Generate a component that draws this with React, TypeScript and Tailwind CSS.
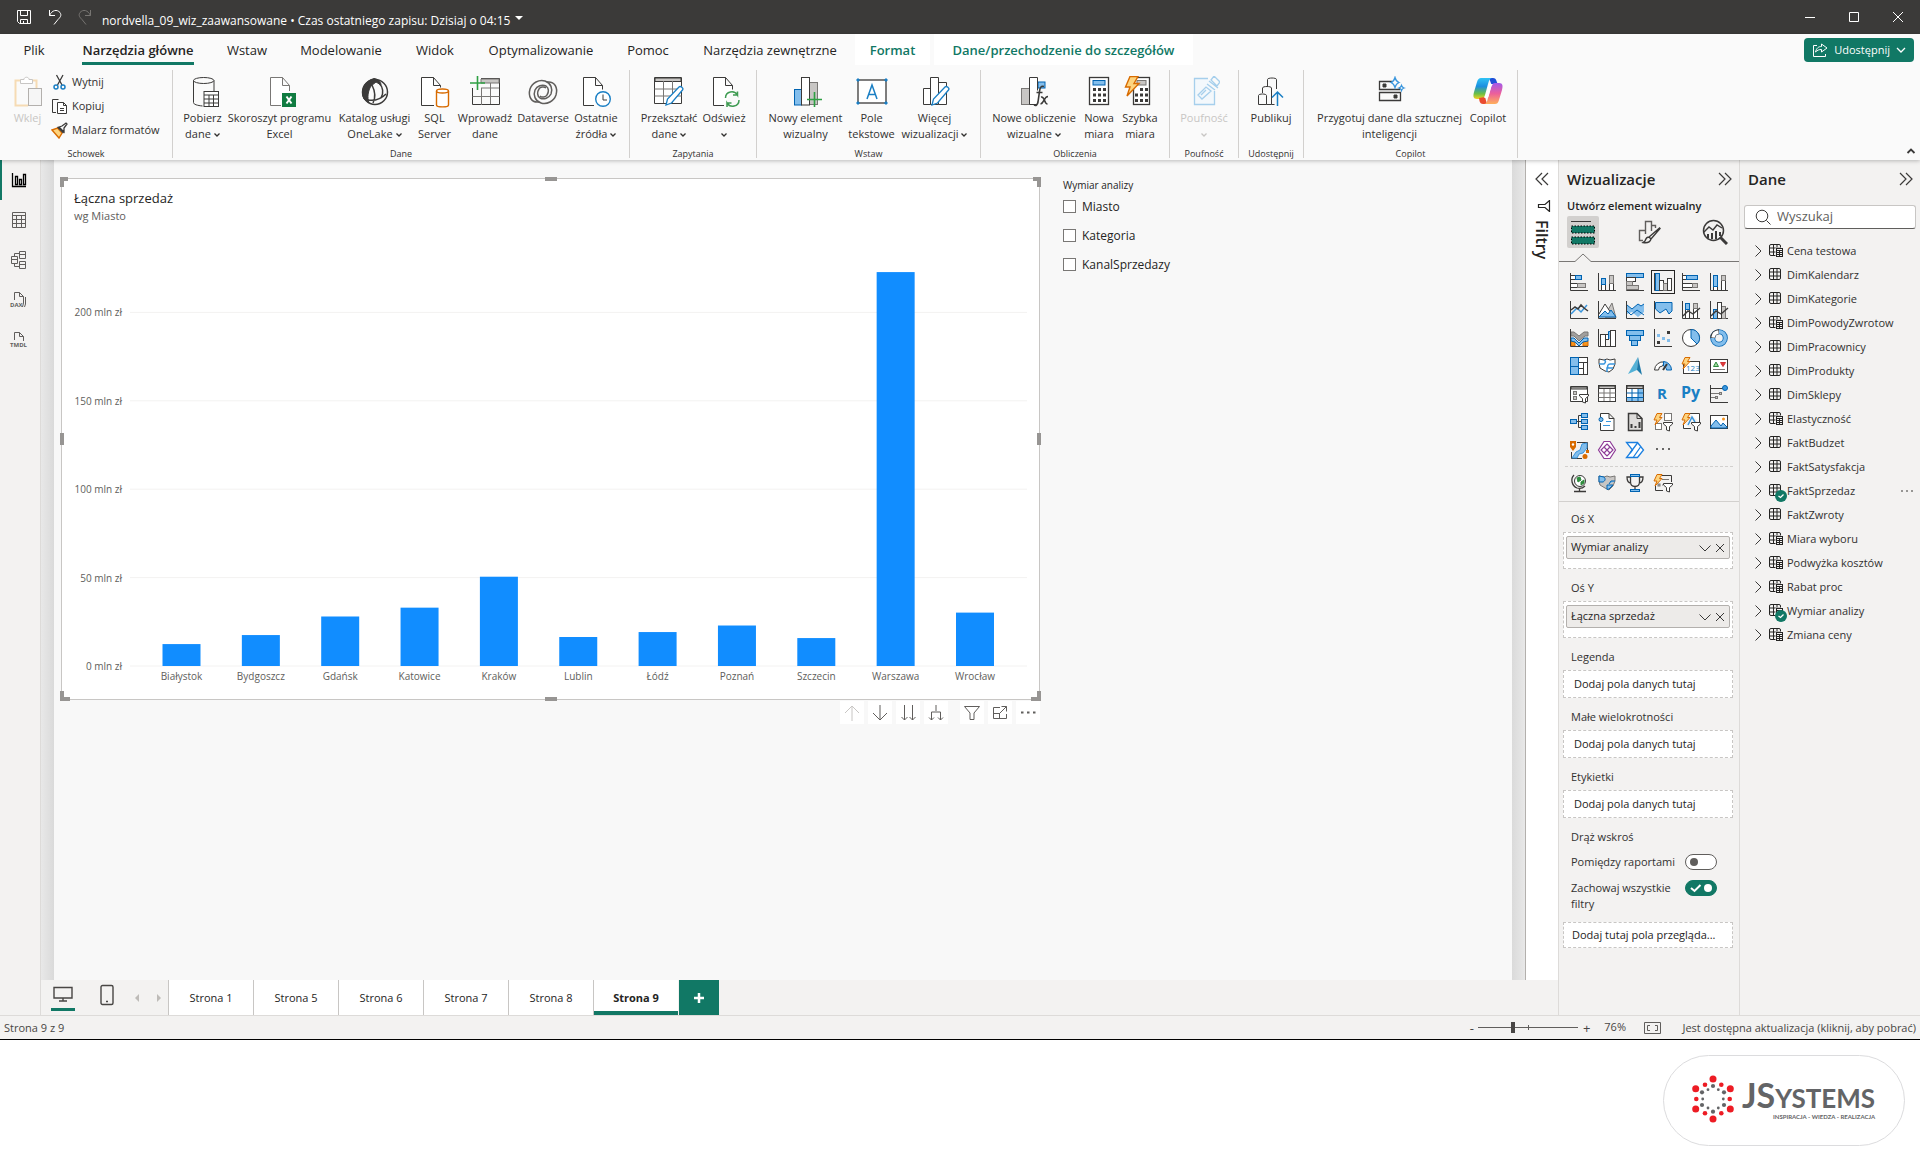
import React from 'react';
import clsx from 'clsx';

const INK = '#3b3a39';
const BLUE = '#0063b1';
const SKY = '#83beec';

const TONES = {
  white: { fill: '#ffffff', stroke: INK },
  blue: { fill: SKY, stroke: BLUE },
  gray: { fill: '#c8c6c4', stroke: '#797775' },
  dim: { fill: '#ffffff', stroke: '#797775' },
};

interface BoxProps {
  x: number;
  y: number;
  w: number;
  h: number;
  tone?: keyof typeof TONES;
}

const Box: React.FC<BoxProps> = ({ x, y, w, h, tone = 'white' }) => (
  <rect x={x} y={y} width={w} height={h} fill={TONES[tone].fill} stroke={TONES[tone].stroke} />
);

interface GlyphProps {
  w?: number;
  h?: number;
  color?: string;
  className?: string;
  children: React.ReactNode;
}

const Glyph: React.FC<GlyphProps> = ({ w = 18, h = w, color = INK, className, children }) => (
  <svg
    width={w}
    height={h}
    viewBox={`0 0 ${w} ${h}`}
    fill="none"
    stroke={color}
    className={clsx('shrink-0', className)}
    aria-hidden="true"
  >
    {children}
  </svg>
);

const Bolt = () => <path d="M3 .5h5L5.500 4.500H8L1 12l2-5H0z" fill="#fdd47f" stroke="#d86b00" />;

const SmallFunnel = () => (
  <path d="M9.500 9.500h9V11l-3 2.500v4.500l-3-1v-3.500l-3-2.500z" fill="#fff" stroke={INK} />
);

/* ---------- ribbon icons, 32px ---------- */

const Pencil = () => (
  <path d="M13 29l1.500-6L26 11c1.500-1.500 5 1 3.500 3L18.500 27z" fill="#fff" stroke="#1a7fc4" strokeWidth="1.3" />
);

const ribbonIcons: Record<string, React.ReactNode> = {
  getData: (
    <>
      <path d="M6.500 4.500v22c0 2 4 3 9 3.500M27 4.500V15" />
      <ellipse cx="16.7" cy="4.5" rx="10.2" ry="3" />
      <rect x="17" y="15.5" width="14.5" height="15" fill="#fff" />
      <path d="M17 19h14.500M17 23h14.500M17 27h14.500M22 19v11M26.500 19v11" />
    </>
  ),
  excel: (
    <>
      <path d="M17 29.500H6.500v-28h12l7 8V15M18.500 1.500v8h7" fill="#fff" stroke="#797775" />
      <rect x="18" y="17" width="14" height="14" fill="#107c41" stroke="none" />
      <path d="M22.500 20.500l5 7M27.500 20.500l-5 7" stroke="#fff" strokeWidth="2" />
    </>
  ),
  oneLake: (
    <>
      <circle cx="16" cy="16" r="12.5" strokeWidth="1.5" />
      <path d="M15 2.500C5 5 1 15 5 23l5 4c-2-6-1-12 2-17l5-4 5 3c0-3-3-6-7-6.500z" fill={INK} />
      <path d="M13 9c3 6 4 12 1 18M9 24c6 1 13-1 18-6M20 7c4 4 5 10 2 15" strokeWidth="1.5" />
    </>
  ),
  sql: (
    <>
      <path d="M15 29.500H2.500v-28h12l7 8v2M14.500 1.500v8h7" fill="#fff" />
      <path d="M17.500 15v14c0 2.500 12 2.500 12 0V15" fill="#fff" stroke="#d86b00" strokeWidth="1.4" />
      <ellipse cx="23.5" cy="15" rx="6" ry="2" fill="#fff" stroke="#d86b00" strokeWidth="1.4" />
    </>
  ),
  enterData: (
    <>
      <path d="M3.500 12v16.500h27v-26H12" />
      <path d="M12 3h18v4H12z" fill="#c8c6c4" stroke="#797775" />
      <path d="M3.500 20.500h27M12 12h18M12.500 12v17M21.500 7v21" stroke="#797775" />
      <path d="M1 7h15M8.500 0v14" stroke="#2ea043" strokeWidth="1.6" />
    </>
  ),
  dataverse: (
    <g strokeWidth="1.5" stroke="#605e5c">
      <path d="M12 26C4 27 1 20 3 13c2-6 9-10 15-8 6 2 8 8 6 13-2 4-7 6-11 4-3-2-3-6-1-9 1-2 5-3 7-1" />
      <path d="M20 6c8-1 11 6 9 13-2 6-9 10-15 8-6-2-8-8-6-13 2-4 7-6 11-4 3 2 3 6 1 9-1 2-5 3-7 1" />
    </g>
  ),
  recent: (
    <>
      <path d="M14 29.500H3.500v-28h12l7 8v4M15.500 1.500v8h7" fill="#fff" />
      <circle cx="23" cy="23" r="7.3" fill="#fff" stroke="#1a7fc4" strokeWidth="1.4" />
      <path d="M23 18.500V24h4" />
    </>
  ),
  transform: (
    <>
      <path d="M1.500 1.500h27v26h-27z" fill="#fff" />
      <path d="M2 2h26v3.500H2z" fill="#c8c6c4" stroke={INK} />
      <path d="M1.500 13h27M1.500 20h27M10.500 5v22M19.500 5v22" stroke="#797775" />
      <Pencil />
    </>
  ),
  refresh: (
    <>
      <path d="M16 29.500H5.500v-28h12l7 8v4M17.500 1.500v8h7" fill="#fff" />
      <path
        d="M17.500 22c0-7 9-8 12-3v-3.500M29.500 19H25M31 24c0 7-9 8-12 3v4M19 27h4.500"
        stroke="#3f9b52"
        strokeWidth="1.5"
      />
    </>
  ),
  newVisual: (
    <>
      <rect x="4.5" y="13.5" width="7" height="15.5" fill={SKY} stroke={BLUE} />
      <rect x="19.5" y="6.5" width="8" height="22" fill="#c8c6c4" stroke="#797775" />
      <rect x="11.5" y="1.5" width="8" height="27.5" fill="#fff" />
      <path d="M17 23.500h15M24.500 16v15" stroke="#2ea043" strokeWidth="1.6" />
    </>
  ),
  textBox: (
    <>
      <rect x="2" y="4" width="28" height="23" fill="#fff" strokeWidth="1.3" />
      <path d="M11 23l5-14 5 14M12.500 18.500h7" stroke="#1a7fc4" strokeWidth="1.5" />
      <path d="M1 3h2v2H1zM29 3h2v2h-2zM1 26h2v2H1zM29 26h2v2h-2z" fill="#1a7fc4" stroke="#1a7fc4" />
    </>
  ),
  moreVisuals: (
    <>
      <path d="M4.500 28.500v-16h7v16zM19.500 28.500v-22h8v22z" fill="#fff" />
      <path d="M11.500 1.500h8v27h-8z" fill="#fff" />
      <Pencil />
    </>
  ),
  newCalc: (
    <>
      <rect x="3.5" y="12.5" width="8" height="16" fill="#c8c6c4" stroke="#797775" />
      <rect x="20" y="6" width="7" height="6" fill={SKY} stroke={BLUE} />
      <path d="M19 28.500h-7.500v-27h8v13" fill="#fff" />
      <path
        d="M26 10.500c-3-1-4 1-4.500 5L20 26c-.5 3-2 4-4 3M18.500 16.500h6M23 21c4-1 3 7 6.500 7M30 20.500c-4 0-4 7-7.500 7.500"
        strokeWidth="1.6"
      />
    </>
  ),
  measure: (
    <>
      <rect x="6.5" y="1.5" width="19" height="27" fill="#fff" strokeWidth="1.3" />
      <rect x="10" y="4.5" width="12" height="4.5" fill={SKY} stroke={BLUE} />
      <path d="M10 13.500h13M10 19h13M10 24.500h13" strokeWidth="3" strokeDasharray="3 2" />
    </>
  ),
  quickMeasure: (
    <>
      <rect x="9.5" y="1.5" width="16" height="27" fill="#fff" strokeWidth="1.3" />
      <rect x="13" y="4.5" width="9" height="4.5" fill="#c8c6c4" stroke="#797775" />
      <path d="M11 19h13M11 24.500h13M16 13.500h8" strokeWidth="3" strokeDasharray="3 2" />
      <path d="M6 .5h8l-4 7h5L3 20l3-9H1.500z" fill="#fdd47f" stroke="#d86b00" strokeWidth="1.4" />
    </>
  ),
  sensitivity: (
    <g stroke="#a6cfec" strokeWidth="1.3">
      <path d="M20 2.500H6.500v26h20V15" fill="#f3f8fc" />
      <path d="M10 19l8-8 5 4-9 8zM13 19l5-5M21 5l9 7M19 8l8 6M23 4l3-4 6 6-3 4z" />
    </g>
  ),
  publish: (
    <>
      <path d="M3.500 28.500v-9c0-2 8-2 8 0v9zM7.500 17v-5c0-2 9-2 9 0v16.500h-5M12.500 10V3.500c0-2 9-2 9 0V13M16.500 28.500h3" />
      <path d="M22.500 30V17M17 21.500l5.500-5.500 5.500 5.500" stroke="#1a7fc4" strokeWidth="1.5" />
    </>
  ),
  prepAi: (
    <>
      <path d="M18 5.500H5.500v8h20v-2M5.500 16.500h21v8h-21z" strokeWidth="1.3" />
      <path d="M9 8h3v3H9zM20 19h3v3h-3z" fill={INK} />
      <path
        d="M21 1.500c.8 3 1.500 4 4 5-2.500 1-3.200 2-4 5-.8-3-1.500-4-4-5 2.500-1 3.200-2 4-5zM27.500 9.500c.5 1.500 1 2 2.500 2.500-1.500.5-2 1-2.500 2.500-.5-1.500-1-2-2.500-2.500 1.500-.5 2-1 2.500-2.500z"
        stroke="#3a96dd"
        strokeWidth="1.3"
      />
    </>
  ),
  copilot: (
    <g stroke="none">
      <defs>
        <linearGradient id="copilotLeft" x1="0" y1="0" x2="0" y2="1">
          <stop offset="0" stopColor="#2fc3f5" />
          <stop offset=".4" stopColor="#1b8fe0" />
          <stop offset=".75" stopColor="#6cbf45" />
          <stop offset="1" stopColor="#f5d020" />
        </linearGradient>
        <linearGradient id="copilotRight" x1="0" y1="0" x2="0" y2="1">
          <stop offset="0" stopColor="#a259ea" />
          <stop offset=".5" stopColor="#ec5f9b" />
          <stop offset="1" stopColor="#ffb05a" />
        </linearGradient>
      </defs>
      <path d="M17 2h4c2 0 3 1 3.500 3L26 9l-6 1z" fill="#1f4fd8" />
      <path d="M9 2h11c-2 0-3 2-4 6l-3 11c-1 3-2 4-4 4H5c-4 0-4-3-3-7l3-10c1-3 2-4 4-4z" fill="url(#copilotLeft)" />
      <path d="M15 28h-4c-2 0-3-1-3.500-3L7 22l6-1z" fill="#ea4b2f" />
      <path d="M23 28H12c2 0 3-2 4-6l3-11c1-3 2-4 4-4h4c4 0 4 3 3 7l-3 10c-1 3-2 4-4 4z" fill="url(#copilotRight)" />
      <path d="M17 8h4c-1 1-1.500 2-2 4l-2 7c-.5 2-1 3-3 3h-2c1-1 1.500-3 2-4z" fill="#fff" />
    </g>
  ),
};

/* ---------- visual gallery icons, 18px ---------- */

const Axes = () => <path d="M.5 0v17.500H18" />;

const TableGrid: React.FC<{ color: string }> = ({ color }) => (
  <>
    <path d="M1 1h16v2.500H1z" fill="#c8c6c4" />
    <path d="M.5 8h17M.5 12.500h17M6 4v12M12 4v12" stroke={color} />
  </>
);

interface Visual {
  id: string;
  label: string;
  icon: React.ReactNode;
}

const visuals: Visual[] = [
  { id: 'stacked-bar', label: 'Skumulowany wykres słupkowy', icon: <><Axes /><Box x={0.5} y={2.5} w={5} h={4} /><Box x={5.5} y={2.5} w={6} h={4} tone="blue" /><Box x={0.5} y={10.5} w={7} h={4} /><Box x={7.5} y={10.5} w={8} h={4} tone="gray" /></> },
  { id: 'stacked-col', label: 'Skumulowany wykres kolumnowy', icon: <><Axes /><Box x={3.5} y={11.5} w={4} h={6} /><Box x={3.5} y={5.5} w={4} h={6} tone="blue" /><Box x={11.5} y={10.5} w={4} h={7} /><Box x={11.5} y={2.5} w={4} h={8} tone="gray" /></> },
  { id: 'bar', label: 'Wykres słupkowy', icon: <><Axes /><Box x={0.5} y={0.5} w={17} h={4} tone="blue" /><Box x={0.5} y={4.5} w={9} h={4} /><Box x={0.5} y={8.5} w={6} h={4} tone="gray" /><Box x={0.5} y={12.5} w={12} h={4} tone="gray" /></> },
  { id: 'col', label: 'Wykres kolumnowy', icon: <><Axes /><Box x={1.5} y={0.5} w={4} h={17} tone="blue" /><Box x={5.5} y={7.5} w={4} h={10} /><Box x={9.5} y={10.5} w={4} h={7} tone="gray" /><Box x={13.5} y={5.5} w={4} h={12} /></> },
  { id: 'bar100', label: 'Wykres słupkowy 100%', icon: <><Axes /><Box x={0.5} y={2.5} w={4} h={4} /><Box x={4.5} y={2.5} w={11} h={4} tone="blue" /><Box x={0.5} y={10.5} w={10} h={4} /><Box x={10.5} y={10.5} w={5} h={4} tone="gray" /></> },
  { id: 'col100', label: 'Wykres kolumnowy 100%', icon: <><Axes /><Box x={3.5} y={13.5} w={4} h={4} /><Box x={3.5} y={2.5} w={4} h={11} tone="blue" /><Box x={11.5} y={7.5} w={4} h={10} /><Box x={11.5} y={2.5} w={4} h={5} tone="gray" /></> },

  { id: 'line', label: 'Wykres liniowy', icon: <><Axes /><path d="M1 13l6-6 4 4 6-7" stroke="#3a96dd" strokeWidth="1.5" /><path d="M1 9l4-3 3 2 3-4 3 3 4 3" strokeWidth="1.5" /></> },
  { id: 'area', label: 'Wykres warstwowy', icon: <><path d="M7 14l7-12 4 15H8z" fill="#c8c6c4" stroke="#797775" /><path d="M1 13l6-10 6 9" fill="#fff" /><path d="M1 16l6-6 3 3 3-4 5 7z" fill={SKY} stroke={BLUE} /><Axes /></> },
  { id: 'stacked-area', label: 'Skumulowany wykres warstwowy', icon: <><path d="M1 4l5 4 6-5 3 2 3-2v8l-6 5-6-5-5 2z" fill={SKY} stroke="none" /><path d="M1 4l5 4 6-5 3 2 3-2M1 10l4 4 6-5 7 5" stroke={BLUE} /><Axes /></> },
  { id: 'area100', label: 'Wykres warstwowy 100%', icon: <><path d="M1.500 1.500H18V10l-3 3-3-5-6 4-4.500-4z" fill={SKY} stroke={BLUE} /><Axes /></> },
  { id: 'line-stacked', label: 'Wykres liniowy i skumulowany', icon: <><Axes /><Box x={3.5} y={7.5} w={4} h={10} /><Box x={3.5} y={2.5} w={4} h={6} tone="blue" /><Box x={11.5} y={7.5} w={4} h={10} /><Box x={11.5} y={2.5} w={4} h={5} tone="gray" /><path d="M1 15l5-5 5 3 7-6" strokeWidth="1.4" /></> },
  { id: 'line-col', label: 'Wykres liniowy i kolumnowy', icon: <><Axes /><Box x={3.5} y={8.5} w={4} h={9} tone="blue" /><Box x={11.5} y={5.5} w={4} h={12} tone="gray" /><Box x={7.5} y={1.5} w={4} h={16} /><path d="M1 15l5-5 5 3 7-6" strokeWidth="1.4" /></> },

  { id: 'ribbon', label: 'Wykres wstążkowy', icon: <><path d="M1 3h3l5 4 5-4h4v4h-3l-6 5-5-5H1z" fill="#a19f9d" stroke="#797775" /><path d="M1 12h4v5H1zM13 12h5v5h-5z" fill="#f7941d" stroke="#d86b00" /><path d="M1 9h3l5 5 5-5h4v3l-5 1-4 4-4-4-4-1z" fill={SKY} stroke={BLUE} /><Axes /></> },
  { id: 'waterfall', label: 'Wykres kaskadowy', icon: <><Axes /><Box x={2.5} y={5.5} w={5} h={12} /><Box x={7.5} y={5.5} w={3} h={5} /><path d="M10.500 10V2.500h2V10" fill={SKY} stroke={BLUE} /><Box x={12.5} y={1.5} w={5} h={16} /></> },
  { id: 'funnel', label: 'Lejek', icon: <><Box x={0.5} y={1.5} w={17} h={5} tone="blue" /><Box x={3.5} y={6.5} w={11} h={5} tone="blue" /><Box x={5.5} y={11.5} w={6} h={5} tone="blue" /></> },
  { id: 'scatter', label: 'Wykres punktowy', icon: <><Axes /><g stroke="none"><path d="M3 5h3v3H3zM8 8h3v3H8zM13 10h3v3h-3z" fill={SKY} /><path d="M13 2h3v3h-3zM3 12h3v3H3z" fill={INK} /></g></> },
  { id: 'pie', label: 'Wykres kołowy', icon: <><circle cx="9" cy="9" r="8.5" fill="#fff" /><path d="M9 .5a8.500 8.500 0 0 1 6 14.500L9 9z" fill={SKY} stroke={BLUE} /></> },
  { id: 'donut', label: 'Wykres pierścieniowy', icon: <><circle cx="9" cy="9" r="6.3" stroke={BLUE} strokeWidth="5" /><circle cx="9" cy="9" r="6.3" stroke={SKY} strokeWidth="3.4" /><path d="M2.700 9A6.300 6.300 0 0 1 9 2.700" stroke={INK} strokeWidth="5" /><path d="M3 8.500A6.300 6.300 0 0 1 8.500 3" stroke="#fff" strokeWidth="3.4" /></> },

  { id: 'treemap', label: 'Mapa drzewa', icon: <><Box x={0.5} y={0.5} w={17} h={17} /><path d="M8.500 5.500h9M13.500 5.500v12M8.500 11.500h5" /><Box x={0.5} y={0.5} w={8} h={17} tone="blue" /><path d="M.5 9.500h8" stroke={BLUE} /></> },
  { id: 'map', label: 'Mapa', icon: <><path d="M1 2l5 1 3-1 3 1 5-1v5l-2 5-4 3-4-1-5-3-1-5z" fill="#fff" /><path d="M1 7h5c2-2 2-3 0-4M9 15v-4h6M17 7h-5c-2 0-3 2-2 4" stroke="#3a96dd" strokeWidth="1.5" /></> },
  { id: 'azure-map', label: 'Azure Maps', icon: <g stroke="none"><path d="M12 0L2 17l9-4z" fill="#53b1d6" /><path d="M12 0l4 18-5-5z" fill="#1b78a8" /></g> },
  { id: 'gauge', label: 'Miernik', icon: <><path d="M.5 13a8.500 8.500 0 0 1 10-8l-2 4a4 4 0 0 0-4 4z" fill="#fff" /><path d="M9.500 4.500A8.500 8.500 0 0 1 17.500 13h-5c0-2-1-3-3-4z" fill={SKY} stroke={BLUE} /><path d="M9 13l4-6" strokeWidth="2" /></> },
  { id: 'card', label: 'Karta', icon: <><Box x={1.5} y={4.5} w={16} h={12} /><text x="4" y="14" fontSize="8" fill="#1a7fc4" stroke="none">123</text><Bolt /></> },
  { id: 'kpi', label: 'Kluczowy wskaźnik wydajności', icon: <><Box x={0.5} y={2.5} w={17} h={13} /><path d="M3.500 9.500L6 5l2.500 4.500z" fill="#9fd89f" stroke="#2e8b3d" /><path d="M10.500 5.500h5L13 9.500z" fill="#e23b3b" stroke="#d13438" /><path d="M3 12.500h12" stroke="#797775" /></> },

  { id: 'slicer', label: 'Fragmentator', icon: <><path d="M.5 1.500h17v15H.5z" fill="#fff" /><path d="M1 2h16v2H1z" fill="#c8c6c4" /><Box x={3.5} y={6.5} w={3} h={3} tone="gray" /><Box x={3.5} y={11.5} w={3} h={3} tone="gray" /><SmallFunnel /></> },
  { id: 'table', label: 'Tabela', icon: <><Box x={0.5} y={0.5} w={17} h={16} /><TableGrid color="#797775" /></> },
  { id: 'matrix', label: 'Macierz', icon: <><Box x={0.5} y={0.5} w={17} h={16} /><path d="M12 4h5v12H1v-4h11z" fill={SKY} stroke="none" /><TableGrid color={BLUE} /></> },
  { id: 'r', label: 'Wizualizacja skryptu języka R', icon: <text x="3" y="14" fontSize="15" fontWeight="700" fill="#1a7fc4" stroke="none">R</text> },
  { id: 'py', label: 'Wizualizacja języka Python', icon: <text x="-1" y="13" fontSize="16" fontWeight="700" fill="#1a7fc4" stroke="none">Py</text> },
  { id: 'influencers', label: 'Kluczowe elementy wpływające', icon: <><Axes /><path d="M1 3.500h13" /><circle cx="15" cy="3" r="2.5" fill="#3a96dd" stroke={BLUE} /><path d="M1 8.500h10M1 12.500h5" stroke="#797775" /><Box x={9.5} y={7.5} w={2} h={2} tone="gray" /><Box x={5.5} y={11.5} w={2} h={2} tone="gray" /></> },

  { id: 'tree', label: 'Drzewo dekompozycji', icon: <><path d="M6 8.500h6M8.500 8.500V2.500h3M8.500 9v5.500h3" /><Box x={0.5} y={6.5} w={6} h={4} tone="blue" /><Box x={11.5} y={0.5} w={6} h={4} tone="blue" /><Box x={11.5} y={6.5} w={6} h={4} tone="blue" /><Box x={11.5} y={12.5} w={6} h={4} tone="blue" /></> },
  { id: 'qna', label: 'Pytania i odpowiedzi', icon: <><path d="M2.500 4V.5H11l5 5v12H2.500V10M11 .5v5h5" fill="#fff" /><circle cx="3" cy="6.5" r="2" fill={SKY} stroke={BLUE} /><path d="M8 8.500h5M5 12.500h7" stroke="#3a96dd" /></> },
  { id: 'narrative', label: 'Narracja', icon: <><path d="M2.500.5H11l5 5v12H2.500z" fill="#dedcda" strokeWidth="1.5" /><path d="M11 .5v5h5" /><path d="M5.500 11v4M9.500 13v2M13.500 9v6" strokeWidth="2" /></> },
  { id: 'btn-slicer', label: 'Fragmentator przycisków', icon: <><Box x={10.5} y={0.5} w={7} h={7} tone="dim" /><Box x={1.5} y={10.5} w={6} h={6} tone="dim" /><Bolt /><SmallFunnel /></> },
  { id: 'text-slicer', label: 'Fragmentator tekstu', icon: <><path d="M8 .5h9.500V9M9 15.500H1.500V11" fill="#fff" /><path d="M6 12l4-8 3 5" stroke="#3a96dd" strokeWidth="1.5" /><Bolt /><SmallFunnel /></> },
  { id: 'image', label: 'Obraz', icon: <><Box x={0.5} y={2.5} w={17} h={13} /><path d="M1 13l5-6 5 6 2-3 4 4v1H1z" fill={SKY} stroke={BLUE} /><circle cx="13.5" cy="6" r="1.5" fill="#f7941d" stroke="none" /></> },

  { id: 'arcgis', label: 'ArcGIS Maps', icon: <><path d="M7 1.500h10.500v8M1.500 11v6.500H12" /><path d="M2 17l4-6 4-2 2-6 5-1v5l-4 5-4 1-2 4z" fill={SKY} stroke="#3a96dd" /><path d="M0 0h6v6l-3 4-3-4z" fill="#d86b00" stroke="none" /><circle cx="3" cy="3.5" r="1.2" fill="#fff" stroke="none" /><circle cx="15" cy="15.5" r="2.5" fill="#d86b00" stroke="none" /><path d="M16 9h3v3h-3z" fill="#d86b00" stroke="none" /></> },
  { id: 'power-apps', label: 'Power Apps', icon: <g stroke="#8e3a97" strokeWidth="1.2" fill="#fff"><path d="M6 .5h6L17.500 9 12 17.500H6L.5 9z" /><path d="M9 3l3 3-3 3-3-3zM9 9l3 3-3 3-3-3zM6 6l3 3-3 3-3-3zM12 6l3 3-3 3-3-3z" /></g> },
  { id: 'power-automate', label: 'Power Automate', icon: <g stroke="#1a7fe0" strokeWidth="1.3"><path d="M.5 1.500h11L17.500 9l-6 7.500H.5L6.500 9z" fill="#fff" /><path d="M4 12l7.500-10M7.500 16l7-10" /></g> },
  { id: 'more', label: 'Więcej', icon: <path d="M2 8h2M8 8h2M14 8h2" strokeWidth="1.5" /> },
];

const pinnedVisuals: Visual[] = [
  { id: 'globe', label: 'Globe Map', icon: <><circle cx="10" cy="7" r="5.5" fill="#fff" /><path d="M7 4l3-1 1 3-3 2zM11 8l3-2v3l-3 2z" fill="#2e8b3d" stroke="#2e8b3d" /><path d="M4 1c-4 4-2 11 3 13 3 1 6 0 8-2M9.500 14v3M4 17.500h12" strokeWidth="1.3" /></> },
  { id: 'choropleth', label: 'Kartogram', icon: <><path d="M1 2l5 1 3-1 3 1 5-1v5l-2 5-4 4-4-2-5-3-1-4z" fill="#c8c6c4" stroke="#797775" /><path d="M1 2l5 1c2 2 1 4-1 5H1zM9 15.500V11h6l-4 4zM17 7h-4l-2 3" fill={SKY} stroke={BLUE} /></> },
  { id: 'goals', label: 'Metryki', icon: <><path d="M4.500 3H1c0 4 1 6 4 6M13.500 3H17c0 4-1 6-4 6M4.500 3v5c0 6 9 6 9 0V3M9 13v3" strokeWidth="1.3" /><Box x={4.5} y={0.5} w={9} h={2} tone="blue" /><Box x={4.5} y={15.5} w={9} h={2} tone="blue" /></> },
  { id: 'list-slicer', label: 'Fragmentator listy', icon: <><path d="M8 1.500h9.500V8M1.500 12v4.500H9" /><path d="M8 5.500h7M8 11h1" stroke="#797775" /><Box x={4} y={10} w={2} h={2} tone="gray" /><Bolt /><SmallFunnel /></> },
];

/* ---------- title bar ---------- */

const TitleBar = () => (
  <header className="flex h-[34px] items-center bg-[#3b3a39] text-white">
    <button type="button" aria-label="Zapisz" className="ml-4">
      <Glyph w={16} color="#fff">
        <path d="M1.500 1.500h13v13h-11l-2-2zM4.500 1.500v5h7v-5M4.500 14.500v-4h7v4M7.500 12v2" />
      </Glyph>
    </button>
    <button type="button" aria-label="Cofnij" className="ml-4">
      <Glyph w={14} h={16} color="#fff">
        <path d="M1.500 1v5.500H7M1.500 6.500C4 1 9 0 12 3.500c2 3 0 5-2 7l-4 5" />
      </Glyph>
    </button>
    <button type="button" aria-label="Ponów" className="ml-4">
      <Glyph w={14} h={16} color="#777572">
        <path d="M12.500 1v5.500H7M12.500 6.500C10 1 5 0 2 3.500c-2 3 0 5 2 7l4 5" />
      </Glyph>
    </button>
    <button type="button" className="ml-[10px] flex items-start gap-1 pt-2 text-[12px] leading-4">
      nordvella_09_wiz_zaawansowane • Czas ostatniego zapisu: Dzisiaj o 04:15
      <Glyph w={10} h={12} color="none">
        <path d="M1 3h8L5 7z" fill="#fff" />
      </Glyph>
    </button>
    <div className="ml-auto flex gap-[30px] pr-[15px]">
      <button type="button" aria-label="Minimalizuj">
        <Glyph w={14} color="#fff"><path d="M2 7.500h10" /></Glyph>
      </button>
      <button type="button" aria-label="Maksymalizuj">
        <Glyph w={14} color="#fff"><path d="M2.500 2.500h9v9h-9z" /></Glyph>
      </button>
      <button type="button" aria-label="Zamknij">
        <Glyph w={14} color="#fff"><path d="M2 2l10 10M12 2L2 12" /></Glyph>
      </button>
    </div>
  </header>
);

/* ---------- ribbon ---------- */

const ribbonTabs = [
  { label: 'Plik', width: 'w-[54px]' },
  { label: 'Narzędzia główne', width: 'ml-1 w-[146px]', active: true },
  { label: 'Wstaw', width: 'w-[72px]' },
  { label: 'Modelowanie', width: 'w-[116px]' },
  { label: 'Widok', width: 'w-[72px]' },
  { label: 'Optymalizowanie', width: 'w-[140px]' },
  { label: 'Pomoc', width: 'w-[74px]' },
  { label: 'Narzędzia zewnętrzne', width: 'w-[170px]' },
  { label: 'Format', width: 'w-[75px]', contextual: true },
  { label: 'Dane/przechodzenie do szczegółów', width: 'ml-1 w-[259px]', contextual: true },
];

const RibbonTabs = () => (
  <nav className="flex h-9 items-start pl-[7px]">
    {ribbonTabs.map((tab) => (
      <button
        key={tab.label}
        type="button"
        className={clsx(
          'flex h-[31px] justify-center pt-[7px] text-[13px] leading-[18px] whitespace-nowrap',
          tab.width,
          tab.contextual ? 'bg-white font-semibold text-[#117865]' : 'text-[#252423]',
          tab.active && 'font-semibold',
        )}
      >
        <span className={clsx('h-6', tab.active && 'border-b-3 border-[#117865]')}>{tab.label}</span>
      </button>
    ))}
    <button
      type="button"
      className="mt-1 mr-1.5 ml-auto flex h-6 items-center gap-1.5 rounded-sm bg-[#117865] px-2 text-[11px] text-white"
    >
      <Glyph w={16} color="#fff">
        <path d="M5 3.500H1.500v11h12V12M3.500 10c1-4 3-5.500 6-5.500V2l5.500 4-5.500 4V7.500c-2.500 0-4 .5-6 2.500z" />
      </Glyph>
      Udostępnij
      <Glyph w={10} color="#fff"><path d="M1 3l4 4 4-4" strokeWidth="1.3" /></Glyph>
    </button>
  </nav>
);

interface RibbonItem {
  icon: string;
  lines: string[];
  width: string;
  menu?: boolean;
  disabled?: boolean;
}

const ribbonGroups: { label: string; items: RibbonItem[] }[] = [
  {
    label: 'Dane',
    items: [
      { icon: 'getData', lines: ['Pobierz', 'dane'], width: 'w-[43px]', menu: true },
      { icon: 'excel', lines: ['Skoroszyt programu', 'Excel'], width: 'w-[111px]' },
      { icon: 'oneLake', lines: ['Katalog usługi', 'OneLake'], width: 'w-[79px]', menu: true },
      { icon: 'sql', lines: ['SQL', 'Server'], width: 'w-[41px]' },
      { icon: 'enterData', lines: ['Wprowadź', 'dane'], width: 'w-[60px]' },
      { icon: 'dataverse', lines: ['Dataverse'], width: 'w-[56px]' },
      { icon: 'recent', lines: ['Ostatnie', 'źródła'], width: 'w-[50px]', menu: true },
    ],
  },
  {
    label: 'Zapytania',
    items: [
      { icon: 'transform', lines: ['Przekształć', 'dane'], width: 'w-[62px]', menu: true },
      { icon: 'refresh', lines: ['Odśwież', ''], width: 'w-12', menu: true },
    ],
  },
  {
    label: 'Wstaw',
    items: [
      { icon: 'newVisual', lines: ['Nowy element', 'wizualny'], width: 'w-[81px]' },
      { icon: 'textBox', lines: ['Pole', 'tekstowe'], width: 'w-[51px]' },
      { icon: 'moreVisuals', lines: ['Więcej', 'wizualizacji'], width: 'w-[75px]', menu: true },
    ],
  },
  {
    label: 'Obliczenia',
    items: [
      { icon: 'newCalc', lines: ['Nowe obliczenie', 'wizualne'], width: 'w-[90px]', menu: true },
      { icon: 'measure', lines: ['Nowa', 'miara'], width: 'w-10' },
      { icon: 'quickMeasure', lines: ['Szybka', 'miara'], width: 'w-[42px]' },
    ],
  },
  {
    label: 'Poufność',
    items: [{ icon: 'sensitivity', lines: ['Poufność', ''], width: 'w-[52px]', menu: true, disabled: true }],
  },
  {
    label: 'Udostępnij',
    items: [{ icon: 'publish', lines: ['Publikuj'], width: 'w-12' }],
  },
  {
    label: 'Copilot',
    items: [
      { icon: 'prepAi', lines: ['Przygotuj dane dla sztucznej', 'inteligencji'], width: 'w-[155px]' },
      { icon: 'copilot', lines: ['Copilot'], width: 'w-[42px]' },
    ],
  },
];

const RibbonButton: React.FC<{ item: RibbonItem }> = ({ item }) => (
  <button
    type="button"
    disabled={item.disabled}
    className={clsx(
      'flex flex-col items-center pt-1.5 text-[11px] leading-4 whitespace-nowrap',
      item.width,
      item.disabled ? 'text-[#c8c6c4]' : 'text-[#323130]',
    )}
  >
    <Glyph w={32} className="mb-0.5">{ribbonIcons[item.icon]}</Glyph>
    {item.lines.map((line, i) => (
      <span key={i} className="flex h-4 items-center gap-[3px]">
        {line}
        {item.menu && i === item.lines.length - 1 && (
          <Glyph w={6} color="currentColor" className="mt-0.5"><path d="M.5 1.500L3 4l2.500-2.500" strokeWidth="1.3" /></Glyph>
        )}
      </span>
    ))}
  </button>
);

const GroupLabel: React.FC<{ children: React.ReactNode }> = ({ children }) => (
  <span className="flex h-2 items-center justify-center text-[9px] whitespace-nowrap text-[#323130]">{children}</span>
);

const Clipboard = () => (
  <div className="flex h-[88px] w-[173px] flex-col justify-between border-r border-[#d2d0ce]">
    <div className="flex items-start">
      <button
        type="button"
        disabled
        className="flex w-[43px] flex-col items-center pt-1.5 pl-3 text-[11px] leading-4 text-[#c8c6c4]"
      >
        <Glyph w={32} className="mb-0.5" color="#f6dbb4">
          <path d="M9 4.500H3.500v25H16M20 4.500h4.500V12" strokeWidth="2" />
          <path d="M8.500 7.500v-4H12c0-3 5-3 5 0h3.500v4z" stroke="#c8c6c4" fill="#fff" />
          <rect x="16.5" y="12.5" width="13" height="17" fill="#f6f6f6" stroke="#b3b0ad" />
        </Glyph>
        Wklej
      </button>
      <div className="flex flex-col pl-2 text-[11px] text-[#323130]">
        <button type="button" className="flex h-6 items-center gap-1">
          <Glyph w={17}>
            <path d="M5.500 1L11 11M12 1L6.500 11" strokeWidth="1.3" />
            <circle cx="5" cy="13" r="2" stroke="#1a7fc4" strokeWidth="1.5" />
            <circle cx="12" cy="13" r="2" stroke="#1a7fc4" strokeWidth="1.5" />
          </Glyph>
          Wytnij
        </button>
        <button type="button" className="flex h-6 items-center gap-1">
          <Glyph w={17}>
            <path d="M5 14.500H1.500v-13h6" />
            <path d="M6.500 4.500h6l3 3v8h-9zM12.500 4.500v3h3M9 10.500h4M9 12.500h4" fill="#fff" />
          </Glyph>
          Kopiuj
        </button>
        <button type="button" className="flex h-6 items-center gap-1">
          <Glyph w={17}>
            <path d="M1 8l7 8 3-5-4.500-5z" fill="#fdd47f" stroke="#d86b00" strokeWidth="1.4" />
            <path d="M6.500 5l6 6M8 5l3-1 4-3 1 1-3 4v4z" strokeWidth="1.3" />
          </Glyph>
          Malarz formatów
        </button>
      </div>
    </div>
    <GroupLabel>Schowek</GroupLabel>
  </div>
);

const Ribbon = () => (
  <section className="relative z-10 bg-[#fafafa] shadow-[0_1px_4px_rgba(0,0,0,0.25)]">
    <RibbonTabs />
    <div className="flex h-[90px]">
      <Clipboard />
      {ribbonGroups.map((group) => (
        <div key={group.label} className="flex h-[88px] flex-col justify-between border-r border-[#d2d0ce] px-2">
          <div className="flex items-start">
            {group.items.map((item) => (
              <RibbonButton key={item.icon} item={item} />
            ))}
          </div>
          <GroupLabel>{group.label}</GroupLabel>
        </div>
      ))}
      <button type="button" aria-label="Zwiń wstążkę" className="mt-auto mr-1 mb-1 ml-auto">
        <Glyph w={10}><path d="M1.500 7L5 3.500 8.500 7" strokeWidth="1.8" /></Glyph>
      </button>
    </div>
  </section>
);

/* ---------- left rail ---------- */

const railItems = [
  {
    label: 'Widok raportu',
    active: true,
    icon: (
      <g stroke="#000">
        <path d="M3.500 3v13.500H17M6.500 6.500h2v8h-2zM10.500 9.500h2v5h-2zM14.500 4.500h2v10h-2z" strokeWidth="1.3" />
      </g>
    ),
  },
  { label: 'Widok tabeli', icon: <path d="M3.500 2.500h13v15h-13zM3.500 5.500h13M3.500 9.500h13M3.500 13.500h13M7.500 5.500v12M12.500 5.500v12" /> },
  {
    label: 'Widok modelu',
    icon: (
      <path d="M2.500 6.500h6v7h-6zM2.500 9.500h6M10.500 1.500h6v7h-6zM10.500 4.500h6M10.500 11.500h6v7h-6zM10.500 14.500h6M5.500 6.500V3.500h5M5.500 13.500v3h5" />
    ),
  },
  {
    label: 'Widok zapytań DAX',
    icon: (
      <>
        <path d="M5.500 10V2.500h5l4 4V13l-1 4M10.500 2.500v4h4M16.500 7v7l-1 3" />
        <text x="1" y="17" fontSize="6" fontWeight="700" fill="#605e5c" stroke="none">DAX</text>
      </>
    ),
  },
  {
    label: 'Widok TMDL',
    icon: (
      <>
        <path d="M5.500 10V2.500h5l4 4V11M10.500 2.500v4h4" />
        <text x="1" y="17" fontSize="6" fontWeight="700" fill="#605e5c" stroke="none">TMDL</text>
      </>
    ),
  },
];

const LeftRail = () => (
  <nav className="flex w-[41px] shrink-0 flex-col border-r border-[#dddbd9] bg-[#f3f2f1]">
    {railItems.map((item) => (
      <button
        key={item.label}
        type="button"
        aria-label={item.label}
        className={clsx(
          'flex h-10 items-center justify-center border-l-2 pr-1',
          item.active ? 'border-[#117865]' : 'border-transparent',
        )}
      >
        <Glyph w={20} color="#605e5c">{item.icon}</Glyph>
      </button>
    ))}
  </nav>
);

/* ---------- report canvas ---------- */

const sales = [
  { city: 'Białystok', value: 12.4 },
  { city: 'Bydgoszcz', value: 17.5 },
  { city: 'Gdańsk', value: 28 },
  { city: 'Katowice', value: 33 },
  { city: 'Kraków', value: 50.5 },
  { city: 'Lublin', value: 16.4 },
  { city: 'Łódź', value: 19.2 },
  { city: 'Poznań', value: 22.9 },
  { city: 'Szczecin', value: 15.8 },
  { city: 'Warszawa', value: 222.8 },
  { city: 'Wrocław', value: 30.2 },
];

const BASELINE = 437;
const PX_PER_MLN = 1.768;
const BAND = 79.35;

const SalesChart = () => (
  <svg viewBox="0 0 977 470" className="block w-full" role="img" aria-label="Łączna sprzedaż wg Miasto">
    {[0, 50, 100, 150, 200].map((tick) => {
      const y = BASELINE - tick * PX_PER_MLN;
      return (
        <g key={tick}>
          <line x1="68" x2="965" y1={y} y2={y} stroke="#f3f2f1" />
          <text x="60" y={y + 4} textAnchor="end" fontSize="10" fill="#605e5c">{tick} mln zł</text>
        </g>
      );
    })}
    {sales.map((row, i) => {
      const center = 119.5 + i * BAND;
      const height = row.value * PX_PER_MLN;
      return (
        <g key={row.city}>
          <rect x={center - 19} y={BASELINE - height} width="38" height={height} fill="#118dff" />
          <text x={center} y={BASELINE + 14} textAnchor="middle" fontSize="10" fill="#605e5c">{row.city}</text>
        </g>
      );
    })}
  </svg>
);

const selectionHandles = [
  '-top-0.5 -left-0.5 h-2.5 w-2 border-t-4 border-l-4',
  '-top-0.5 -right-0.5 h-2.5 w-2 border-t-4 border-r-4',
  '-bottom-0.5 -left-0.5 h-2.5 w-2.5 border-b-4 border-l-4',
  '-right-0.5 -bottom-0.5 h-2.5 w-2.5 border-r-4 border-b-4',
  '-top-0.5 left-1/2 w-3 -translate-x-1/2 border-t-4',
  '-bottom-0.5 left-1/2 w-3 -translate-x-1/2 border-t-4',
  'top-1/2 -left-0.5 h-3 -translate-y-1/2 border-l-4',
  'top-1/2 -right-0.5 h-3 -translate-y-1/2 border-l-4',
];

const visualActions = [
  { label: 'Przejdź w górę hierarchii', color: '#c8c6c4', icon: <path d="M9 17V2M2 9l7-7 7 7" /> },
  { label: 'Przejdź w dół hierarchii', icon: <path d="M9 1v15M2 9l7 7 7-7" /> },
  { label: 'Następny poziom', icon: <path d="M5.500 1v15M2.500 13l3 3 3-3M13.500 1v15M10.500 13l3 3 3-3" /> },
  { label: 'Rozwiń poziom', icon: <path d="M9 1v6M4.500 16V8h9v8M2 13.500l2.500 2.500L7 13.500M11 13.500l2.500 2.500 2.500-2.500" /> },
  { label: 'Filtry elementu', icon: <path d="M1.500 2.500h15L11 9v6.500H7V9z" />, gap: true },
  { label: 'Tryb koncentracji uwagi', icon: <path d="M9 3.500H2.500v11h13V10M10.500 2.500h5v5M15.500 2.500L8 10M2.500 9.500h6v5" /> },
  { label: 'Więcej opcji', icon: <path d="M2 8.500h2.500M8 8.500h2.500M14 8.500h2.500" strokeWidth="2" /> },
];

const ChartVisual = () => (
  <div>
    <div className="relative border border-[#c8c6c4] bg-white">
      {selectionHandles.map((place) => (
        <span key={place} className={clsx('absolute border-[#979593]', place)} />
      ))}
      <div className="h-[50px] pt-2.5 pl-3">
        <h2 className="text-[13px] leading-[18px] font-medium text-[#252423]">Łączna sprzedaż</h2>
        <p className="text-[11px] leading-[18px] text-[#605e5c]">wg Miasto</p>
      </div>
      <SalesChart />
    </div>
    <div className="flex justify-end gap-1 pt-px">
      {visualActions.map((action) => (
        <button
          key={action.label}
          type="button"
          aria-label={action.label}
          className={clsx('flex h-[23px] w-6 items-center justify-center bg-white', action.gap && 'ml-2')}
        >
          <Glyph color={action.color ?? '#605e5c'}>{action.icon}</Glyph>
        </button>
      ))}
    </div>
  </div>
);

const Slicer = () => (
  <fieldset className="pl-[23px] text-[#252423]">
    <legend className="text-[10px] leading-[14px] font-medium">Wymiar analizy</legend>
    {['Miasto', 'Kategoria', 'KanalSprzedazy'].map((name) => (
      <label key={name} className="flex h-[29px] items-center gap-1.5 text-[12px]">
        <input type="checkbox" className="h-[13px] w-[13px] appearance-none border border-[#797775] bg-white" />
        {name}
      </label>
    ))}
  </fieldset>
);

const Canvas = () => (
  <main className="flex min-w-0 flex-1">
    <div className="w-[13px] shrink-0 bg-linear-to-r from-[#e8e8e8] to-[#dadada]" />
    <div className="grid flex-1 grid-cols-[979fr_472fr] items-start bg-[#f8f8f8] pt-[18px] pl-[7px]">
      <ChartVisual />
      <Slicer />
    </div>
    <div className="w-[13px] shrink-0 bg-linear-to-r from-[#dadada] to-[#e8e8e8]" />
  </main>
);

/* ---------- page tabs ---------- */

const pages = ['Strona 1', 'Strona 5', 'Strona 6', 'Strona 7', 'Strona 8', 'Strona 9'];

const PageTabs = () => (
  <nav className="flex h-[35px] bg-[#f3f2f1] text-[11px] text-[#252423]">
    <button
      type="button"
      aria-label="Układ pulpitu"
      className="mb-1 ml-2.5 flex w-6 flex-col items-center border-b-3 border-[#117865] pt-1.5"
    >
      <Glyph w={20} h={16} color="#484644">
        <path d="M1 1.500h18v10.500H1zM10 12v3M6 15h8" strokeWidth="1.4" />
      </Glyph>
    </button>
    <button type="button" aria-label="Układ dla urządzeń przenośnych" className="ml-[25px] self-start pt-1">
      <Glyph w={14} h={22} color="#484644">
        <rect x="1" y="1.500" width="12" height="19" rx="1.500" strokeWidth="1.4" />
        <path d="M6 17.500h2" strokeWidth="1.4" />
      </Glyph>
    </button>
    <button type="button" aria-label="Poprzednia strona" className="ml-5">
      <Glyph w={6} h={10} color="none"><path d="M5 1v8L1 5z" fill="#bebbb8" /></Glyph>
    </button>
    <button type="button" aria-label="Następna strona" className="mr-1.5 ml-4">
      <Glyph w={6} h={10} color="none"><path d="M1 1v8l4-4z" fill="#bebbb8" /></Glyph>
    </button>
    {pages.map((page) => (
      <button
        key={page}
        type="button"
        className={clsx(
          'w-[85px] border-l border-[#c8c6c4] bg-white pt-0.5',
          page === 'Strona 9' && 'font-bold shadow-[inset_0_-4px_0_#117865]',
        )}
      >
        {page}
      </button>
    ))}
    <button type="button" aria-label="Nowa strona" className="ml-px flex w-10 items-center justify-center bg-[#117865]">
      <Glyph w={12} color="#fff"><path d="M6 1v10M1 6h10" strokeWidth="2.5" /></Glyph>
    </button>
  </nav>
);

/* ---------- filters pane ---------- */

const ChevronPair: React.FC<{ left?: boolean; label: string }> = ({ left, label }) => (
  <button type="button" aria-label={label}>
    <Glyph w={14}>
      <path d={left ? 'M7 1L1 7l6 6M13 1L7 7l6 6' : 'M1 1l6 6-6 6M7 1l6 6-6 6'} strokeWidth="1.2" />
    </Glyph>
  </button>
);

const FiltersPane = () => (
  <aside className="flex w-[33px] shrink-0 flex-col items-center border-l border-[#b3b0ad] bg-white pt-3">
    <ChevronPair left label="Rozwiń okienko filtrów" />
    <Glyph w={14} h={12} className="mt-3.5 ml-1" color="#252423">
      <path d="M12.500.5v11L8 7.500H1.500v-3H8z" strokeWidth="1.2" />
    </Glyph>
    <h2 className="mt-2 text-[16px] leading-5 font-semibold text-[#252423] [writing-mode:vertical-rl]">Filtry</h2>
  </aside>
);

/* ---------- visualizations pane ---------- */

const GalleryGrid: React.FC<{ items: Visual[] }> = ({ items }) => (
  <div className="grid grid-cols-[repeat(6,28px)] px-1.5">
    {items.map((visual) => (
      <button
        key={visual.id}
        type="button"
        title={visual.label}
        className={clsx(
          'm-0.5 flex h-6 items-center justify-center border',
          visual.id === 'col' ? 'border-[#252423]' : 'border-transparent',
        )}
      >
        <Glyph className="overflow-visible">{visual.icon}</Glyph>
      </button>
    ))}
  </div>
);

const FieldWell: React.FC<{ label: string; field?: string }> = ({ label, field }) => (
  <section className="flex flex-col gap-[5px]">
    <h3 className="px-2 text-[11px] leading-4 text-[#323130]">{label}</h3>
    {field ? (
      <div className="h-[37px] border border-dashed border-[#c8c6c4] bg-white px-0.5 pt-[3px]">
        <div className="flex h-[23px] items-center rounded-xs border border-[#b3b0ad] bg-[#edebe9] px-1 text-[11px] text-[#252423]">
          <span className="flex-1">{field}</span>
          <button type="button" aria-label="Opcje pola" className="mr-1">
            <Glyph w={12}><path d="M.5 3.500L6 9l5.500-5.500" /></Glyph>
          </button>
          <button type="button" aria-label="Usuń pole">
            <Glyph w={10}><path d="M1 1l8 8M9 1L1 9" /></Glyph>
          </button>
        </div>
      </div>
    ) : (
      <p className="flex h-7 items-center border border-dashed border-[#c8c6c4] bg-white pl-2.5 text-[11px] text-[#252423]">
        Dodaj pola danych tutaj
      </p>
    )}
  </section>
);

const Toggle: React.FC<{ label: string; on?: boolean }> = ({ label, on }) => (
  <label className="flex items-start text-[11px] leading-4 text-[#323130]">
    <span className="w-[114px]">{label}</span>
    <span className="relative flex">
      <input
        type="checkbox"
        role="switch"
        defaultChecked={on}
        className="h-4 w-8 appearance-none rounded-full border border-[#605e5c] bg-white checked:border-[#117865] checked:bg-[#117865]"
      />
      <svg width="32" height="16" viewBox="0 0 32 16" className="pointer-events-none absolute inset-0" aria-hidden="true">
        {on ? (
          <>
            <path d="M6 8l3.500 3 6-6" fill="none" stroke="#fff" strokeWidth="2" />
            <circle cx="23" cy="8" r="4" fill="#fff" />
          </>
        ) : (
          <circle cx="9" cy="8" r="4" fill="#605e5c" />
        )}
      </svg>
    </span>
  </label>
);

const VisualizationsPane = () => (
  <aside className="w-[181px] shrink-0 border-l border-[#dddbd9] bg-[#f3f2f1]">
    <div className="flex h-[38px] items-center justify-between pr-[7px] pl-2">
      <h2 className="text-[15px] font-semibold text-[#252423]">Wizualizacje</h2>
      <ChevronPair label="Zwiń okienko wizualizacji" />
    </div>
    <h3 className="pl-2 text-[11px] leading-4 font-semibold text-[#252423]">Utwórz element wizualny</h3>
    <div className="mt-0.5 flex justify-between pr-2 pl-2">
      <button
        type="button"
        aria-label="Utwórz wizualizację"
        className="flex h-8 w-8 items-center justify-center rounded-xs bg-[#d2d0ce]"
      >
        <Glyph w={26}>
          <path d="M1 2.500h20" />
          <rect x="1.5" y="7" width="23" height="7" fill="#117865" stroke="#000" strokeDasharray="1.5 1.5" />
          <rect x="1.5" y="18" width="23" height="7" fill="#117865" stroke="#000" strokeDasharray="1.5 1.5" />
        </Glyph>
      </button>
      <button type="button" aria-label="Formatuj wizualizację" className="flex h-8 w-8 items-center justify-center">
        <Glyph w={24}>
          <path d="M6 20.500H2.500v-10h6M8.500 14V1.500h6V11M14.500 5.500h4V8" stroke="#605e5c" strokeWidth="1.4" />
          <path d="M22.500 8L12 17l2 2L23 8.500zM12 17c-3 0-3 2-4 4l-2 1.500c3 .5 7 0 8-3.500z" strokeWidth="1.4" />
        </Glyph>
      </button>
      <button type="button" aria-label="Analiza" className="flex h-8 w-8 items-center justify-center">
        <Glyph w={26}>
          <circle cx="11.5" cy="11.5" r="10" strokeWidth="1.5" />
          <path d="M2 13l5-5 4 3 4-5 5 3" strokeWidth="1.4" />
          <path d="M6 19v-4M10 20v-6M14 20v-8M18 17v-4" strokeWidth="2" />
          <path d="M18 18l7 7" strokeWidth="3" />
        </Glyph>
      </button>
    </div>
    <svg viewBox="0 0 180 15" className="block h-[15px] w-full" fill="none" stroke="#797775" aria-hidden="true">
      <path d="M0 13.500h16l8-7.500 8 7.500h148" />
    </svg>
    <div className="pt-[5px]">
      <GalleryGrid items={visuals} />
    </div>
    <div className="mx-1.5 my-0.5 border-t border-dashed border-[#d2d0ce]" />
    <GalleryGrid items={pinnedVisuals} />
    <div className="mt-1 border-t border-[#d2d0ce]" />
    <div className="flex flex-col gap-[11px] pt-[9px] pr-1.5 pl-1">
      <FieldWell label="Oś X" field="Wymiar analizy" />
      <FieldWell label="Oś Y" field="Łączna sprzedaż" />
      <FieldWell label="Legenda" />
      <FieldWell label="Małe wielokrotności" />
      <FieldWell label="Etykietki" />
      <h3 className="px-2 text-[11px] leading-4 font-medium text-[#323130]">Drąż wskroś</h3>
    </div>
    <div className="flex flex-col gap-2.5 pt-[9px] pr-1.5 pl-1">
      <div className="flex flex-col gap-2.5 px-2">
        <Toggle label="Pomiędzy raportami" />
        <Toggle label="Zachowaj wszystkie filtry" on />
      </div>
      <p className="flex h-[26px] items-center border border-dashed border-[#c8c6c4] bg-white pl-2 text-[11px] whitespace-nowrap text-[#252423]">
        Dodaj tutaj pola przegląda...
      </p>
    </div>
  </aside>
);

/* ---------- data pane ---------- */

interface ModelTable {
  name: string;
  calculated?: boolean;
  used?: boolean;
  menu?: boolean;
}

const tables: ModelTable[] = [
  { name: 'Cena testowa', calculated: true },
  { name: 'DimKalendarz' },
  { name: 'DimKategorie' },
  { name: 'DimPowodyZwrotow', calculated: true },
  { name: 'DimPracownicy' },
  { name: 'DimProdukty' },
  { name: 'DimSklepy' },
  { name: 'Elastyczność', calculated: true },
  { name: 'FaktBudzet' },
  { name: 'FaktSatysfakcja' },
  { name: 'FaktSprzedaz', used: true, menu: true },
  { name: 'FaktZwroty' },
  { name: 'Miara wyboru', calculated: true },
  { name: 'Podwyżka kosztów', calculated: true },
  { name: 'Rabat proc', calculated: true },
  { name: 'Wymiar analizy', calculated: true, used: true },
  { name: 'Zmiana ceny', calculated: true },
];

const TableIcon: React.FC<{ table: ModelTable }> = ({ table }) => (
  <Glyph w={18} color="#252423" className="overflow-visible">
    <rect x="0.5" y="2.5" width="11" height="11" rx="1.5" />
    <path d="M.5 6h11M.5 10h11M4.500 2.500v11M8 2.500v11" />
    {table.calculated && (
      <>
        <rect x="6.5" y="5.500" width="9" height="11" fill="#f3f2f1" stroke="none" />
        <rect x="7.5" y="6.5" width="6" height="8" />
        <path d="M7.500 8.500h6M7.500 10.500h6M7.500 12.500h6M10.500 8.500v6" />
      </>
    )}
    {table.used && (
      <>
        <circle cx="12" cy="14" r="6" fill="#117865" stroke="none" />
        <path d="M9.500 14l2 1.500 3-3" stroke="#fff" strokeWidth="1.3" />
      </>
    )}
  </Glyph>
);

const DataPane = () => (
  <aside className="w-[181px] shrink-0 border-l border-[#dddbd9] bg-[#f3f2f1]">
    <div className="flex h-[38px] items-center justify-between pr-[7px] pl-2">
      <h2 className="text-[15px] font-semibold text-[#252423]">Dane</h2>
      <ChevronPair label="Zwiń okienko danych" />
    </div>
    <label className="mx-1 mt-[7px] flex h-6 items-center gap-1.5 rounded-[3px] border border-[#c8c6c4] border-b-[#605e5c] bg-white pl-2.5">
      <Glyph w={16}>
        <circle cx="7" cy="7" r="5.8" />
        <path d="M11.500 11.500l4 4" />
      </Glyph>
      <input
        type="search"
        aria-label="Wyszukaj"
        placeholder="Wyszukaj"
        className="w-full min-w-0 text-[13px] outline-none placeholder:text-[#605e5c]"
      />
    </label>
    <ul className="pt-2.5">
      {tables.map((table) => (
        <li key={table.name} className="flex h-6 items-center pl-3.5 text-[11px] text-[#323130]">
          <button type="button" aria-label={`Rozwiń ${table.name}`} className="mr-1.5">
            <Glyph w={9} h={12}><path d="M1.500.5L7 6l-5.500 5.500" /></Glyph>
          </button>
          <TableIcon table={table} />
          <span>{table.name}</span>
          {table.menu && (
            <button type="button" aria-label="Więcej opcji" className="mr-[7px] ml-auto">
              <Glyph w={12} h={4}><path d="M0 2h2M5 2h2M10 2h2" /></Glyph>
            </button>
          )}
        </li>
      ))}
    </ul>
  </aside>
);

/* ---------- status bar and footer ---------- */

const StatusBar = () => (
  <div className="flex h-[25px] items-center border-t border-b border-t-[#dddbd9] border-b-black bg-[#f3f2f1] px-1 text-[11px] text-[#484644]">
    <span className="pt-0.5">Strona 9 z 9</span>
    <div className="ml-auto flex items-center">
      <button type="button" aria-label="Pomniejsz" className="mr-1 text-[13px] leading-4">-</button>
      <span className="relative flex items-center">
        <input
          type="range"
          aria-label="Powiększenie"
          defaultValue={35}
          className="h-3 w-[100px] appearance-none bg-transparent [&::-webkit-slider-runnable-track]:h-px [&::-webkit-slider-runnable-track]:bg-[#605e5c] [&::-webkit-slider-thumb]:-mt-[5px] [&::-webkit-slider-thumb]:h-[11px] [&::-webkit-slider-thumb]:w-1 [&::-webkit-slider-thumb]:appearance-none [&::-webkit-slider-thumb]:bg-[#484644]"
        />
        <span className="pointer-events-none absolute left-1/2 h-[5px] w-px bg-[#605e5c]" />
      </span>
      <button type="button" aria-label="Powiększ" className="ml-[5px] text-[13px] leading-4">+</button>
      <span className="ml-[14px]">76%</span>
      <button type="button" aria-label="Dopasuj do strony" className="mr-3 ml-[18px]">
        <Glyph w={17} h={12} color="#605e5c">
          <path d="M.5.5h16v11H.5zM6 3.500H3.500v5H6M11 3.500h2.500v5H11" />
        </Glyph>
      </button>
      <a href="#update" className="w-[243px] pt-0.5 text-right whitespace-nowrap">
        Jest dostępna aktualizacja (kliknij, aby pobrać)
      </a>
    </div>
  </div>
);

const logoDots = [
  { r: 3.5, fill: '#ed1c24', at: [[21, 4], [3.7, 13.7], [38.3, 13.7], [3.7, 34], [38.3, 34], [21, 44]] },
  { r: 2.3, fill: '#ed1c24', at: [[13, 9.7], [29.3, 9.7], [4.3, 24], [37.7, 24], [13, 38.3], [29.3, 38.3]] },
  { r: 2.1, fill: '#636466', at: [[21, 11], [10, 17.3], [32, 17.3], [10, 30], [32, 30], [21, 36.7]] },
  { r: 1.4, fill: '#636466', at: [[16, 14.7], [26.3, 14.7], [10.7, 24], [31.3, 24], [16, 33], [26.3, 33]] },
];

const BrandFooter = () => (
  <footer className="flex justify-end pt-[15px] pr-[15px] pb-4">
    <a
      href="#jsystems"
      className="flex h-[91px] w-[242px] items-center gap-2 rounded-full border border-[#dcdcde] bg-white pl-7 font-['Lato',sans-serif] text-[#636466]"
    >
      <svg width="42" height="48" viewBox="0 0 42 48" className="mb-1 shrink-0" aria-hidden="true">
        {logoDots.map((ring) =>
          ring.at.map(([cx, cy]) => <circle key={`${cx}-${cy}`} cx={cx} cy={cy} r={ring.r} fill={ring.fill} />),
        )}
      </svg>
      <span className="flex flex-col items-end">
        <span className="text-[26px] leading-[30px] font-bold">
          <span className="text-[34px]">JS</span>YSTEMS
        </span>
        <span className="text-[6px] leading-[8px] font-bold whitespace-nowrap">INSPIRACJA - WIEDZA - REALIZACJA</span>
      </span>
    </a>
  </footer>
);

const App = () => (
  <div className="flex min-h-screen flex-col bg-white font-['Open_Sans','Noto_Sans',sans-serif]">
    <TitleBar />
    <Ribbon />
    <div className="flex flex-1">
      <LeftRail />
      <div className="flex min-w-0 flex-1 flex-col">
        <div className="flex flex-1">
          <Canvas />
          <FiltersPane />
        </div>
        <PageTabs />
      </div>
      <VisualizationsPane />
      <DataPane />
    </div>
    <StatusBar />
    <BrandFooter />
  </div>
);

export default App;
